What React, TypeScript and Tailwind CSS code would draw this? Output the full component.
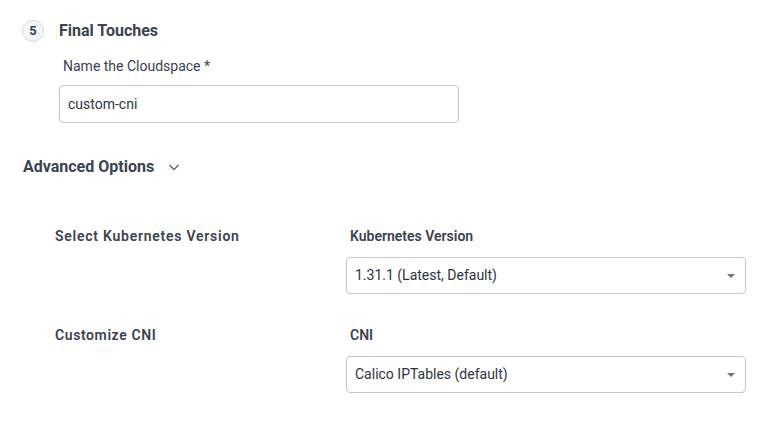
import React from "react";

const font = { fontFamily: 'Roboto, "Noto Sans", sans-serif' };

const Caret = () => (
  <svg width="8" height="4" viewBox="0 0 8 4" className="text-[#6b7280]">
    <path d="M0 0h8L4 4z" fill="currentColor" />
  </svg>
);

const Chevron = () => (
  <svg width="12" height="8" viewBox="0 0 12 8" fill="none" stroke="#5b6270" strokeWidth="1.3">
    <path d="M1.5 2l4.5 4.5L10.5 2" />
  </svg>
);

const SelectBox = ({ value }: { value: string }) => (
  <div className="flex h-[37px] w-[400px] items-center justify-between rounded-[4px] border border-[#c4c7cc] bg-white pl-[8px] pr-[10px] text-[14px] text-[#2f3440]">
    <span>{value}</span>
    <Caret />
  </div>
);

export default function App() {
  return (
    <div className="min-h-[422px] w-[774px] bg-white text-[#3b4250]" style={font}>
      <div className="flex items-center gap-[15px] pl-[22px] pt-[19px]">
        <div className="flex h-[22px] w-[22px] items-center justify-center rounded-full border border-[#d8dadf] bg-[#f4f5f7] text-[13px] font-bold text-[#3b4250]">
          5
        </div>
        <h2 className="text-[16px] font-bold text-[#3b4250]">Final Touches</h2>
      </div>
      <div className="pl-[59px] pt-[13px]">
        <label className="block pl-[4px] text-[14px] text-[#3b4250]">Name the Cloudspace *</label>
        <div className="mt-[8px] flex h-[38px] w-[400px] items-center rounded-[4px] border border-[#c4c7cc] px-[8px] text-[14px] text-[#2f3440]">
          custom-cni
        </div>
      </div>
      <div className="flex items-center gap-[14px] pl-[23px] pt-[32px]">
        <h3 className="text-[16px] font-bold text-[#3b4250]">Advanced Options</h3>
        <Chevron />
      </div>
      <div className="grid grid-cols-[291px_400px] gap-y-[31px] pl-[55px] pt-[47px]">
        <div className="text-[14px] font-semibold tracking-[0.75px] text-[#3b4250]">Select Kubernetes Version</div>
        <div>
          <div className="pl-[4px] text-[14px] font-semibold text-[#3b4250]">Kubernetes Version</div>
          <div className="mt-[10px]">
            <SelectBox value="1.31.1 (Latest, Default)" />
          </div>
        </div>
        <div className="text-[14px] font-semibold tracking-[0.6px] text-[#3b4250]">Customize CNI</div>
        <div>
          <div className="pl-[4px] text-[14px] font-semibold text-[#3b4250]">CNI</div>
          <div className="mt-[10px]">
            <SelectBox value="Calico IPTables (default)" />
          </div>
        </div>
      </div>
    </div>
  );
}
